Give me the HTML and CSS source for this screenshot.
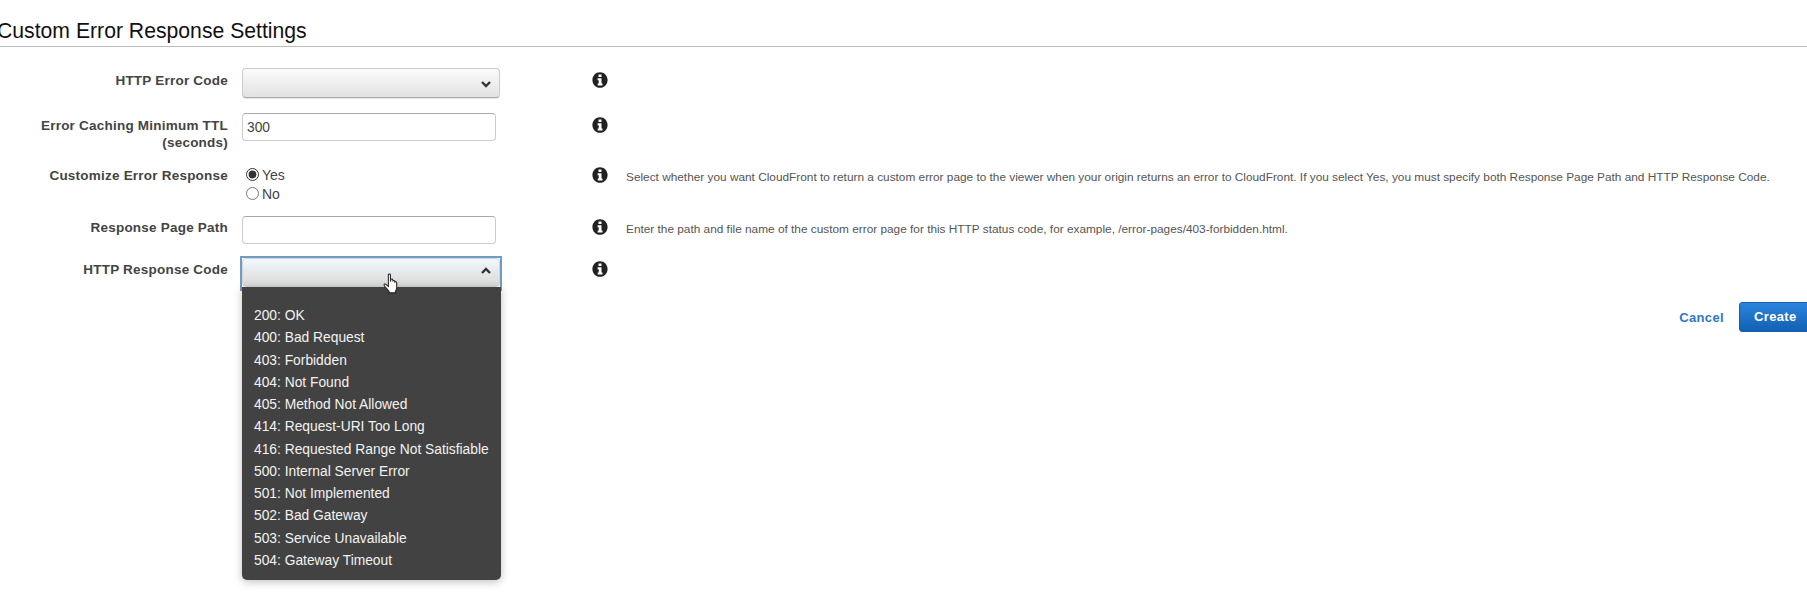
FILE: index.html
```html
<!DOCTYPE html>
<html lang="en">
<head>
<meta charset="utf-8">
<title>Custom Error Response Settings</title>
<link rel="stylesheet" href="styles.css">
</head>
<body>
<svg class="defs" width="0" height="0" aria-hidden="true">
  <symbol id="info" viewBox="0 0 16 16">
    <path fill-rule="evenodd" d="M8 0.2C3.7 0.2 0.4 3.6 0.4 8s3.3 7.8 7.6 7.8 7.6-3.4 7.6-7.8S12.300 0.200 8 0.200zM6.500 2.600h3v2.500h-3zM5.600 6.300h3.900v5.200h1v1.900h-4.800v-1.900h1v-3.300h-1.100z"/>
  </symbol>
</svg>
<main class="page">
  <h1 class="title">Custom Error Response Settings</h1>
  <div class="row row-a">
    <label class="label">HTTP Error Code</label>
    <div class="control"><div class="select"><svg class="chev" viewBox="0 0 12 8"><path d="M2 2l4 4 4-4"/></svg></div></div>
    <svg class="info"><use href="#info"/></svg>
  </div>
  <div class="row row-b">
    <label class="label">Error Caching Minimum TTL (seconds)</label>
    <div class="control"><input class="input" type="text" value="300"></div>
    <svg class="info"><use href="#info"/></svg>
  </div>
  <div class="row row-c">
    <label class="label">Customize Error Response</label>
    <div class="control radios">
      <label class="radio"><input type="radio" name="c" checked>Yes</label>
      <label class="radio"><input type="radio" name="c">No</label>
    </div>
    <svg class="info"><use href="#info"/></svg>
    <p class="help">Select whether you want CloudFront to return a custom error page to the viewer when your origin returns an error to CloudFront. If you select Yes, you must specify both Response Page Path and HTTP Response Code.</p>
  </div>
  <div class="row row-d">
    <label class="label">Response Page Path</label>
    <div class="control"><input class="input" type="text"></div>
    <svg class="info"><use href="#info"/></svg>
    <p class="help">Enter the path and file name of the custom error page for this HTTP status code, for example, /error-pages/403-forbidden.html.</p>
  </div>
  <div class="row row-e">
    <label class="label">HTTP Response Code</label>
    <div class="control">
      <div class="select select-open"><svg class="chev chev-open" viewBox="0 0 12 8"><path d="M2 6l4-4 4 4"/></svg></div>
      <ul class="menu">
        <li>200: OK</li>
        <li>400: Bad Request</li>
        <li>403: Forbidden</li>
        <li>404: Not Found</li>
        <li>405: Method Not Allowed</li>
        <li>414: Request-URI Too Long</li>
        <li>416: Requested Range Not Satisfiable</li>
        <li>500: Internal Server Error</li>
        <li>501: Not Implemented</li>
        <li>502: Bad Gateway</li>
        <li>503: Service Unavailable</li>
        <li>504: Gateway Timeout</li>
      </ul>
      <svg class="hand" viewBox="0 0 16 22"><path d="M5 1.800c0-1.200 2-1.200 2 0v6.400l.4-2c.8-.8 1.800-.4 1.900.5l.1.800c.6-.7 1.700-.4 1.800.5v.6c.7-.5 1.700-.2 1.800.7v4.700c0 1.500-.7 2.400-1.200 3.500v1.500H5.600v-1.500C4.200 15.600 1.600 13.500 1 11.800c-.4-1.100.8-1.800 1.700-1l2.300 1.900z"/></svg>
    </div>
    <svg class="info"><use href="#info"/></svg>
  </div>
  <div class="actions">
    <a class="cancel">Cancel</a>
    <button class="create" type="button">Create</button>
  </div>
</main>
</body>
</html>
```

FILE: styles.css
```css
html, body {
  margin: 0;
  height: 100%;
  overflow: hidden;
  background: #fff;
}
.defs { position: absolute; }
.page {
  font-family: "Liberation Sans", Arial, sans-serif;
  color: #444;
  width: 1807px;
}
.title {
  margin: 0;
  height: 46px;
  border-bottom: 1px solid #bbb;
  font-size: 21.200px;
  font-weight: 400;
  line-height: 62px;
  color: #111;
  text-indent: -3px;
}
.row {
  display: grid;
  grid-template-columns: 228px 260px 16px 1fr;
  align-items: start;
}
.row-a { padding-top: 21px; height: 45px; --lab: 4px; --ico: 4px; --help: 0px; }
.row-b { height: 54px; --lab: 4px; --ico: 4px; --help: 0px; }
.row-c { height: 49px; --lab: 0px; --ico: 0px; --help: 2px; }
.row-d { height: 40px; --lab: 3px; --ico: 3px; --help: 5px; }
.row-e { height: 46px; --lab: 5px; --ico: 5px; --help: 0px; }
.label {
  margin-top: var(--lab);
  font-size: 13.500px;
  font-weight: 700;
  line-height: 17px;
  letter-spacing: .22px;
  text-align: right;
  color: #444;
}
.row-b .label { padding-left: 20px; }
.control {
  position: relative;
  margin-left: 14px;
  width: 258px;
  grid-column: 2;
}
.info {
  grid-column: 3;
  width: 16px;
  height: 16px;
  margin: var(--ico) 0 0 104px;
  fill: #222;
  overflow: visible;
}
.help {
  grid-column: 4;
  margin: var(--help) 0 0 122px;
  font-size: 11.830px;
  line-height: 17px;
  color: #555;
  white-space: nowrap;
}
.select {
  position: relative;
  box-sizing: border-box;
  height: 30px;
  width: 258px;
  border: 1px solid #ccc;
  border-bottom-color: #aaa;
  border-radius: 4px;
  background: linear-gradient(#fbfbfb, #e2e2e2);
  box-shadow: 0 1px 1px rgba(0, 0, 0, .1);
}
.select-open {
  height: 29px;
  margin-top: 2px;
  border-color: #d5d5d5;
  background: linear-gradient(#f2f8fd, #d8d8d8);
  box-shadow: none;
}
.select-open::before {
  content: "";
  position: absolute;
  inset: -3px -3px -5px -3px;
  border: 2px solid #6f9cc4;
}
.chev {
  position: absolute;
  right: 7px;
  top: 11px;
  width: 12px;
  height: 8px;
  fill: none;
  stroke: #333;
  stroke-width: 2.400;
}
.chev-open { top: 8px; }
.input {
  display: block;
  box-sizing: border-box;
  width: 254px;
  height: 28px;
  margin: 0;
  padding: 0 4px;
  border: 1px solid #ccc;
  border-top-color: #aaa;
  border-radius: 4px;
  background: #fff;
  font: 13.800px "Liberation Sans", Arial, sans-serif;
  color: #444;
}
.radios {
  display: flex;
  flex-direction: column;
  margin-top: -2px;
}
.radio {
  display: flex;
  align-items: center;
  height: 19px;
  font-size: 14px;
  color: #444;
}
.radio input {
  width: 13px;
  height: 13px;
  margin: 0 3px 0 4px;
  accent-color: #333;
}
.menu {
  position: absolute;
  z-index: 2;
  top: 31px;
  left: 0;
  box-sizing: border-box;
  width: 259px;
  height: 293px;
  margin: 0;
  padding: 18px 0 0 12px;
  list-style: none;
  border-radius: 0 0 5px 5px;
  background: #424242;
  box-shadow: 0 2px 8px rgba(0, 0, 0, .25);
  color: #f2f2f2;
  font-size: 13.800px;
  line-height: 22.250px;
}
.hand {
  position: absolute;
  z-index: 3;
  left: 141px;
  top: 17px;
  width: 17px;
  height: 23px;
  fill: #fff;
  stroke: #222;
  stroke-width: 1;
}
.actions {
  display: flex;
  align-items: center;
  justify-content: flex-end;
  margin-right: -8px;
  gap: 15px;
}
.cancel {
  font-size: 13px;
  font-weight: 700;
  letter-spacing: .35px;
  color: #2f78c4;
}
.create {
  box-sizing: border-box;
  width: 76px;
  height: 30px;
  padding: 0 0 2px 14px;
  text-align: left;
  border: 1px solid #1b5fa8;
  border-radius: 3px;
  background: linear-gradient(#2a84dc, #1360b4);
  color: #fff;
  font: 700 13px "Liberation Sans", Arial, sans-serif;
  letter-spacing: .35px;
}
```
